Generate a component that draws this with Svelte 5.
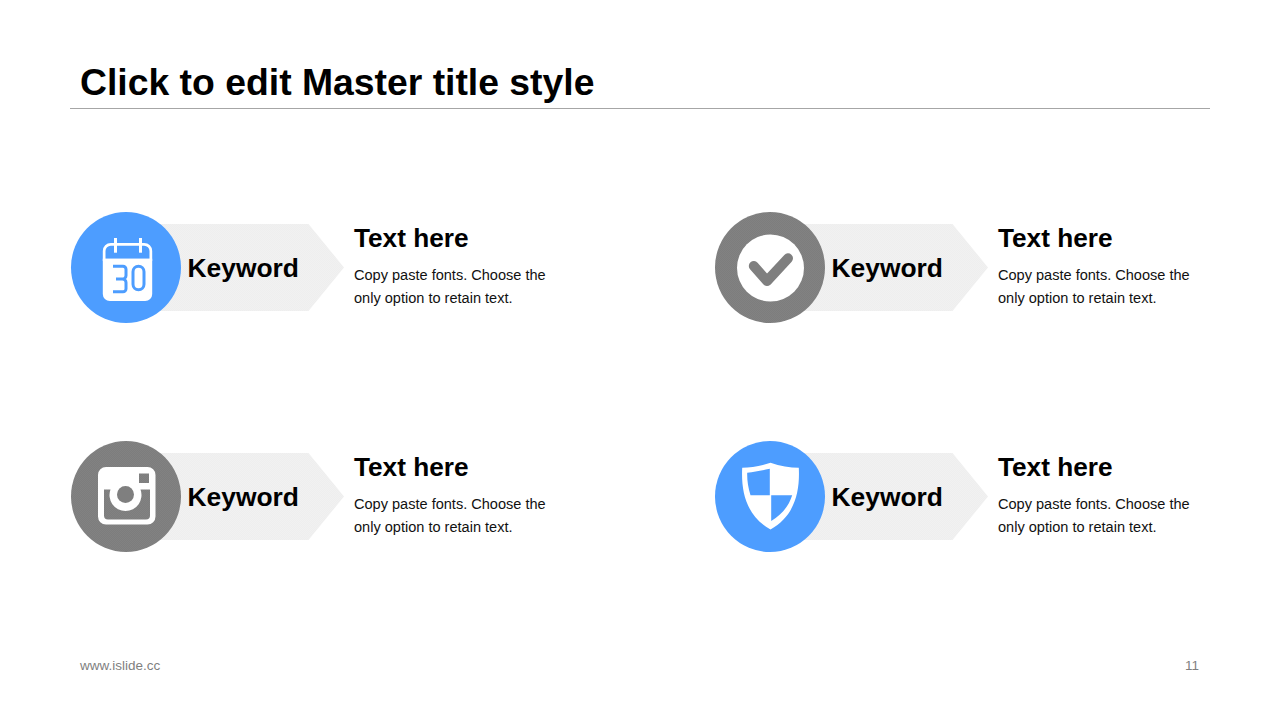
<script lang="ts">
const items = [
	{ icon: 'calendar', tone: 'blue' },
	{ icon: 'check', tone: 'gray' },
	{ icon: 'camera', tone: 'gray' },
	{ icon: 'shield', tone: 'blue' }
];
</script>

<div class="slide">
	<header class="head">
		<h1>Click to edit Master title style</h1>
	</header>

	<main class="grid">
		{#each items as item}
			<section class="item">
				<div class="badge">
					<div class="circle {item.tone}">
						<svg width="110" height="110" viewBox="0 0 110 110">
							{#if item.icon === 'calendar'}
								<path fill="#fff" d="M31.800 39a8 8 0 0 1 8-8h33.400a8 8 0 0 1 8 8v10h-49.400z" />
								<path fill="#4d9dff" d="M34.500 46.700v-7.700a5.300 5.300 0 0 1 5.300-5.300h33.400a5.300 5.300 0 0 1 5.300 5.300v7.700z" />
								<rect x="43" y="26" width="3" height="14.700" fill="#fff" />
								<rect x="68" y="26" width="3" height="14.700" fill="#fff" />
								<path fill="#fff" d="M31.800 46.700h49.400v35.300a7 7 0 0 1-7 7h-35.400a7 7 0 0 1-7-7z" />
								<path fill="none" stroke="#4d9dff" stroke-width="3" d="M42 54.200h10a3 3 0 0 1 3 3v6.300a3.500 3.500 0 0 1-3.500 3.500h-6.500m6.500 0a3.500 3.500 0 0 1 3.500 3.500v6.300a3 3 0 0 1-3 3h-10" />
								<rect x="62" y="54.200" width="11" height="23.600" rx="5.500" fill="none" stroke="#4d9dff" stroke-width="3" />
							{:else if item.icon === 'check'}
								<circle cx="55.500" cy="56" r="33.500" fill="#fff" />
								<path fill="none" stroke="#7f7f7f" stroke-width="10" stroke-linecap="round" stroke-linejoin="round" d="M38.800 54l13.200 15 21-22.700" />
							{:else if item.icon === 'camera'}
								<path fill="#fff" fill-rule="evenodd" d="M35 26h41.500a8 8 0 0 1 8 8v41.500a8 8 0 0 1-8 8H35a8 8 0 0 1-8-8V34a8 8 0 0 1 8-8zM68 32.500v9.500h10v-9.500zM33 48.500v26a4 4 0 0 0 4 4h38a4 4 0 0 0 4-4v-26h-9.500a16 16 0 1 1-30 0z" />
								<circle cx="54.500" cy="53.500" r="8.500" fill="#7f7f7f" />
							{:else}
								<path fill="#fff" d="M55.500 21.800C65 25 75 26.800 83.800 26.800 85 50 80 75 55.500 88.500 31 75 26 50 27.200 26.800 36 26.800 46 25 55.500 21.800z" />
								<path fill="#4d9dff" d="M32.200 31.800C40 31 47 29.500 54.800 27.800v26.400H35.500C33 46 32 39 32.200 31.800zM56.200 54.200h21C74 64 68 73 56.200 80z" />
							{/if}
						</svg>
					</div>
					<div class="arrow">Keyword</div>
				</div>
				<div class="copy">
					<h2>Text here</h2>
					<p>Copy paste fonts. Choose the<br />only option to retain text.</p>
				</div>
			</section>
		{/each}
	</main>

	<footer class="foot">
		<span>www.islide.cc</span>
		<span>11</span>
	</footer>
</div>

<style>
:global(body) {
	margin: 0;
	background: #fff;
}

.slide {
	width: 1280px;
	height: 720px;
	display: flex;
	flex-direction: column;
	box-sizing: border-box;
	font-family: "Liberation Sans", Arial, sans-serif;
	color: #000;
	overflow: hidden;
}

.head {
	margin: 60px 70px 0;
	padding: 0 10px 3px;
	height: 45px;
	border-bottom: 1px solid #a6a6a6;
}

h1 {
	margin: 0;
	font-size: 37.330px;
	line-height: 45px;
	font-weight: 700;
}

.grid {
	display: grid;
	grid-template-columns: 644px 1fr;
	row-gap: 118px;
	padding: 103px 0 0 70.500px;
	flex: 1;
	align-content: start;
}

.item {
	display: flex;
	align-items: center;
	gap: 10px;
	height: 111px;
}

.badge {
	display: flex;
	align-items: center;
	width: 273.500px;
	height: 111px;
	flex: none;
}

.circle {
	position: relative;
	z-index: 1;
	width: 110px;
	height: 111px;
	flex: none;
	border-radius: 50%;
}

.circle svg {
	display: block;
}

.circle.blue {
	background: #4d9dff;
}

.circle.gray {
	background: repeating-conic-gradient(#7d7d7d 0 25%, #828282 0 50%) 0 0 / 2px 2px;
}

.arrow {
	margin-left: -40px;
	width: 203.500px;
	height: 87px;
	box-sizing: border-box;
	padding-left: 47px;
	background: repeating-conic-gradient(#eeeeee 0 25%, #f1f1f1 0 50%) 0 0 / 2px 2px;
	clip-path: polygon(0 0, 168px 0, 100% 50%, 168px 100%, 0 100%);
	font-size: 26.400px;
	font-weight: 700;
	line-height: 88px;
}

.copy {
	margin-top: -3px;
}

h2 {
	margin: 0 0 10px;
	font-size: 26.200px;
	line-height: 32px;
	font-weight: 700;
}

p {
	margin: 0;
	font-size: 14.550px;
	line-height: 23px;
	color: #111;
}

.foot {
	display: flex;
	justify-content: space-between;
	padding: 0 81px 46px 80px;
	font-size: 13.500px;
	line-height: 16px;
	color: #7f7f7f;
}
</style>
